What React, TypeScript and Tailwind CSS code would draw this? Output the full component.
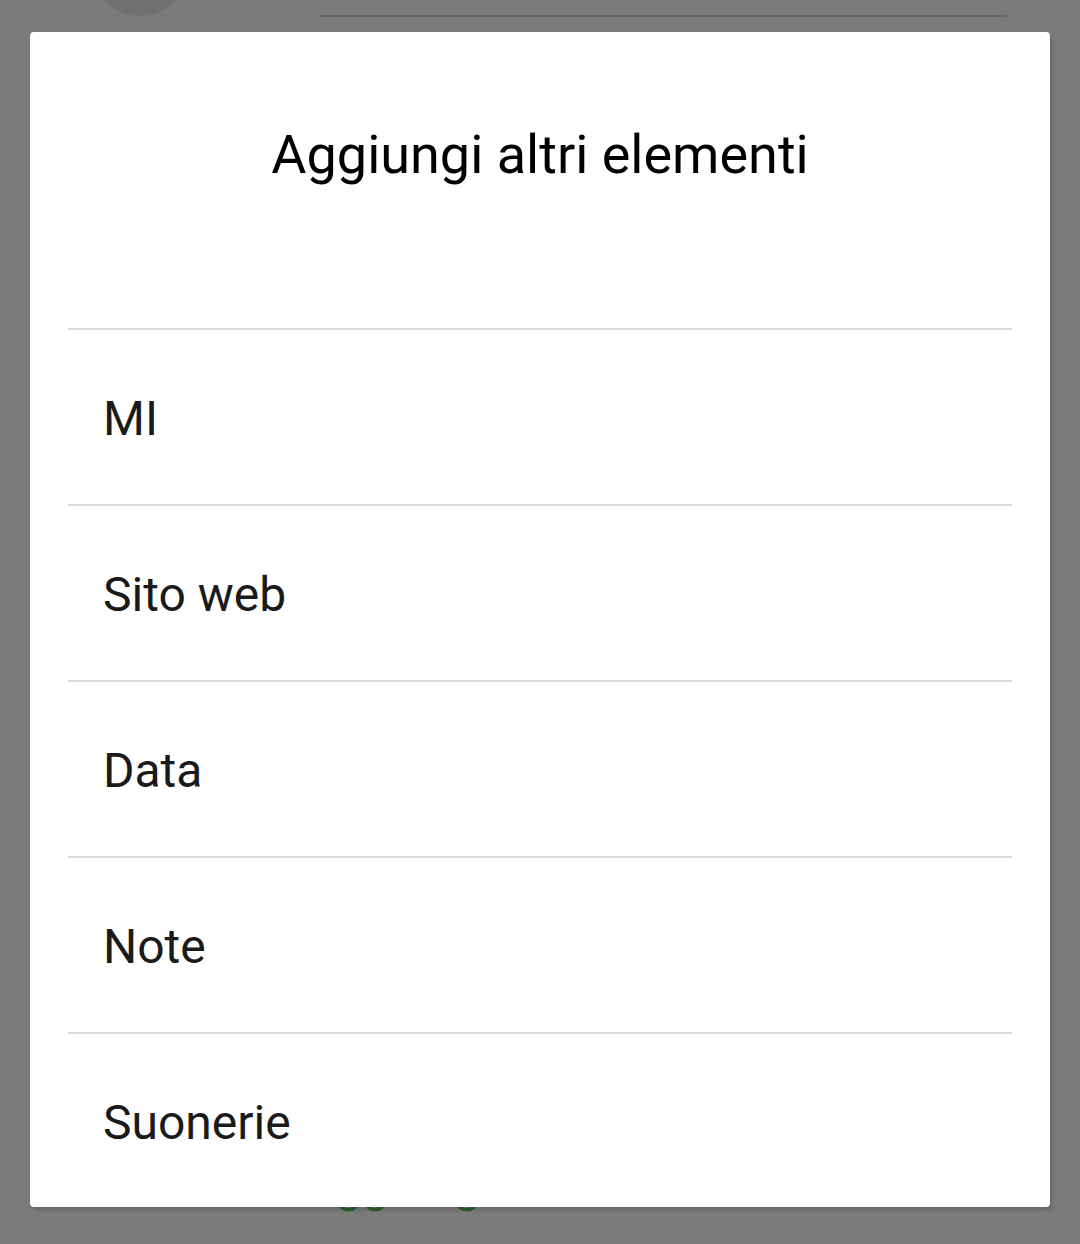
const ITEMS = ["MI", "Sito web", "Data", "Note", "Suonerie"];

export default function App() {
  return (
    <div
      className="relative h-[1244px] w-[1080px] overflow-hidden bg-[#7b7b7b]"
      style={{ fontFamily: "Roboto, 'Noto Sans', sans-serif" }}
    >
      {/* screen behind the scrim */}
      <div className="flex items-start">
        <div className="ml-[90px] mt-[-84px] h-[100px] w-[100px] shrink-0 rounded-full bg-[#707070]" />
        <div className="ml-[130px] mt-[15px] h-[2px] w-[687px] bg-[#666666]" />
      </div>
      <div className="ml-[304px] mt-[1140px] text-[48px] leading-[56px] text-[#2f5f2f]">
        Aggiungi altro
      </div>

      {/* dialog */}
      <div className="absolute left-[30px] top-[32px] flex h-[1175px] w-[1020px] flex-col overflow-hidden rounded-[4px] bg-white shadow-[3px_4px_3px_rgba(0,0,0,0.12)]">
        <div className="h-[296px] shrink-0 pt-[91px] text-center text-[54px] leading-[64px] text-black">
          Aggiungi altri elementi
        </div>
        {ITEMS.map((item) => (
          <div key={item} className="mx-[38px] flex h-[176px] shrink-0 items-center border-t-2 border-[#dadada] pl-[35px] pt-[4px]">
            <span className="text-[48px] leading-[56px] text-[#1a1a1a]">{item}</span>
          </div>
        ))}
      </div>
    </div>
  );
}
